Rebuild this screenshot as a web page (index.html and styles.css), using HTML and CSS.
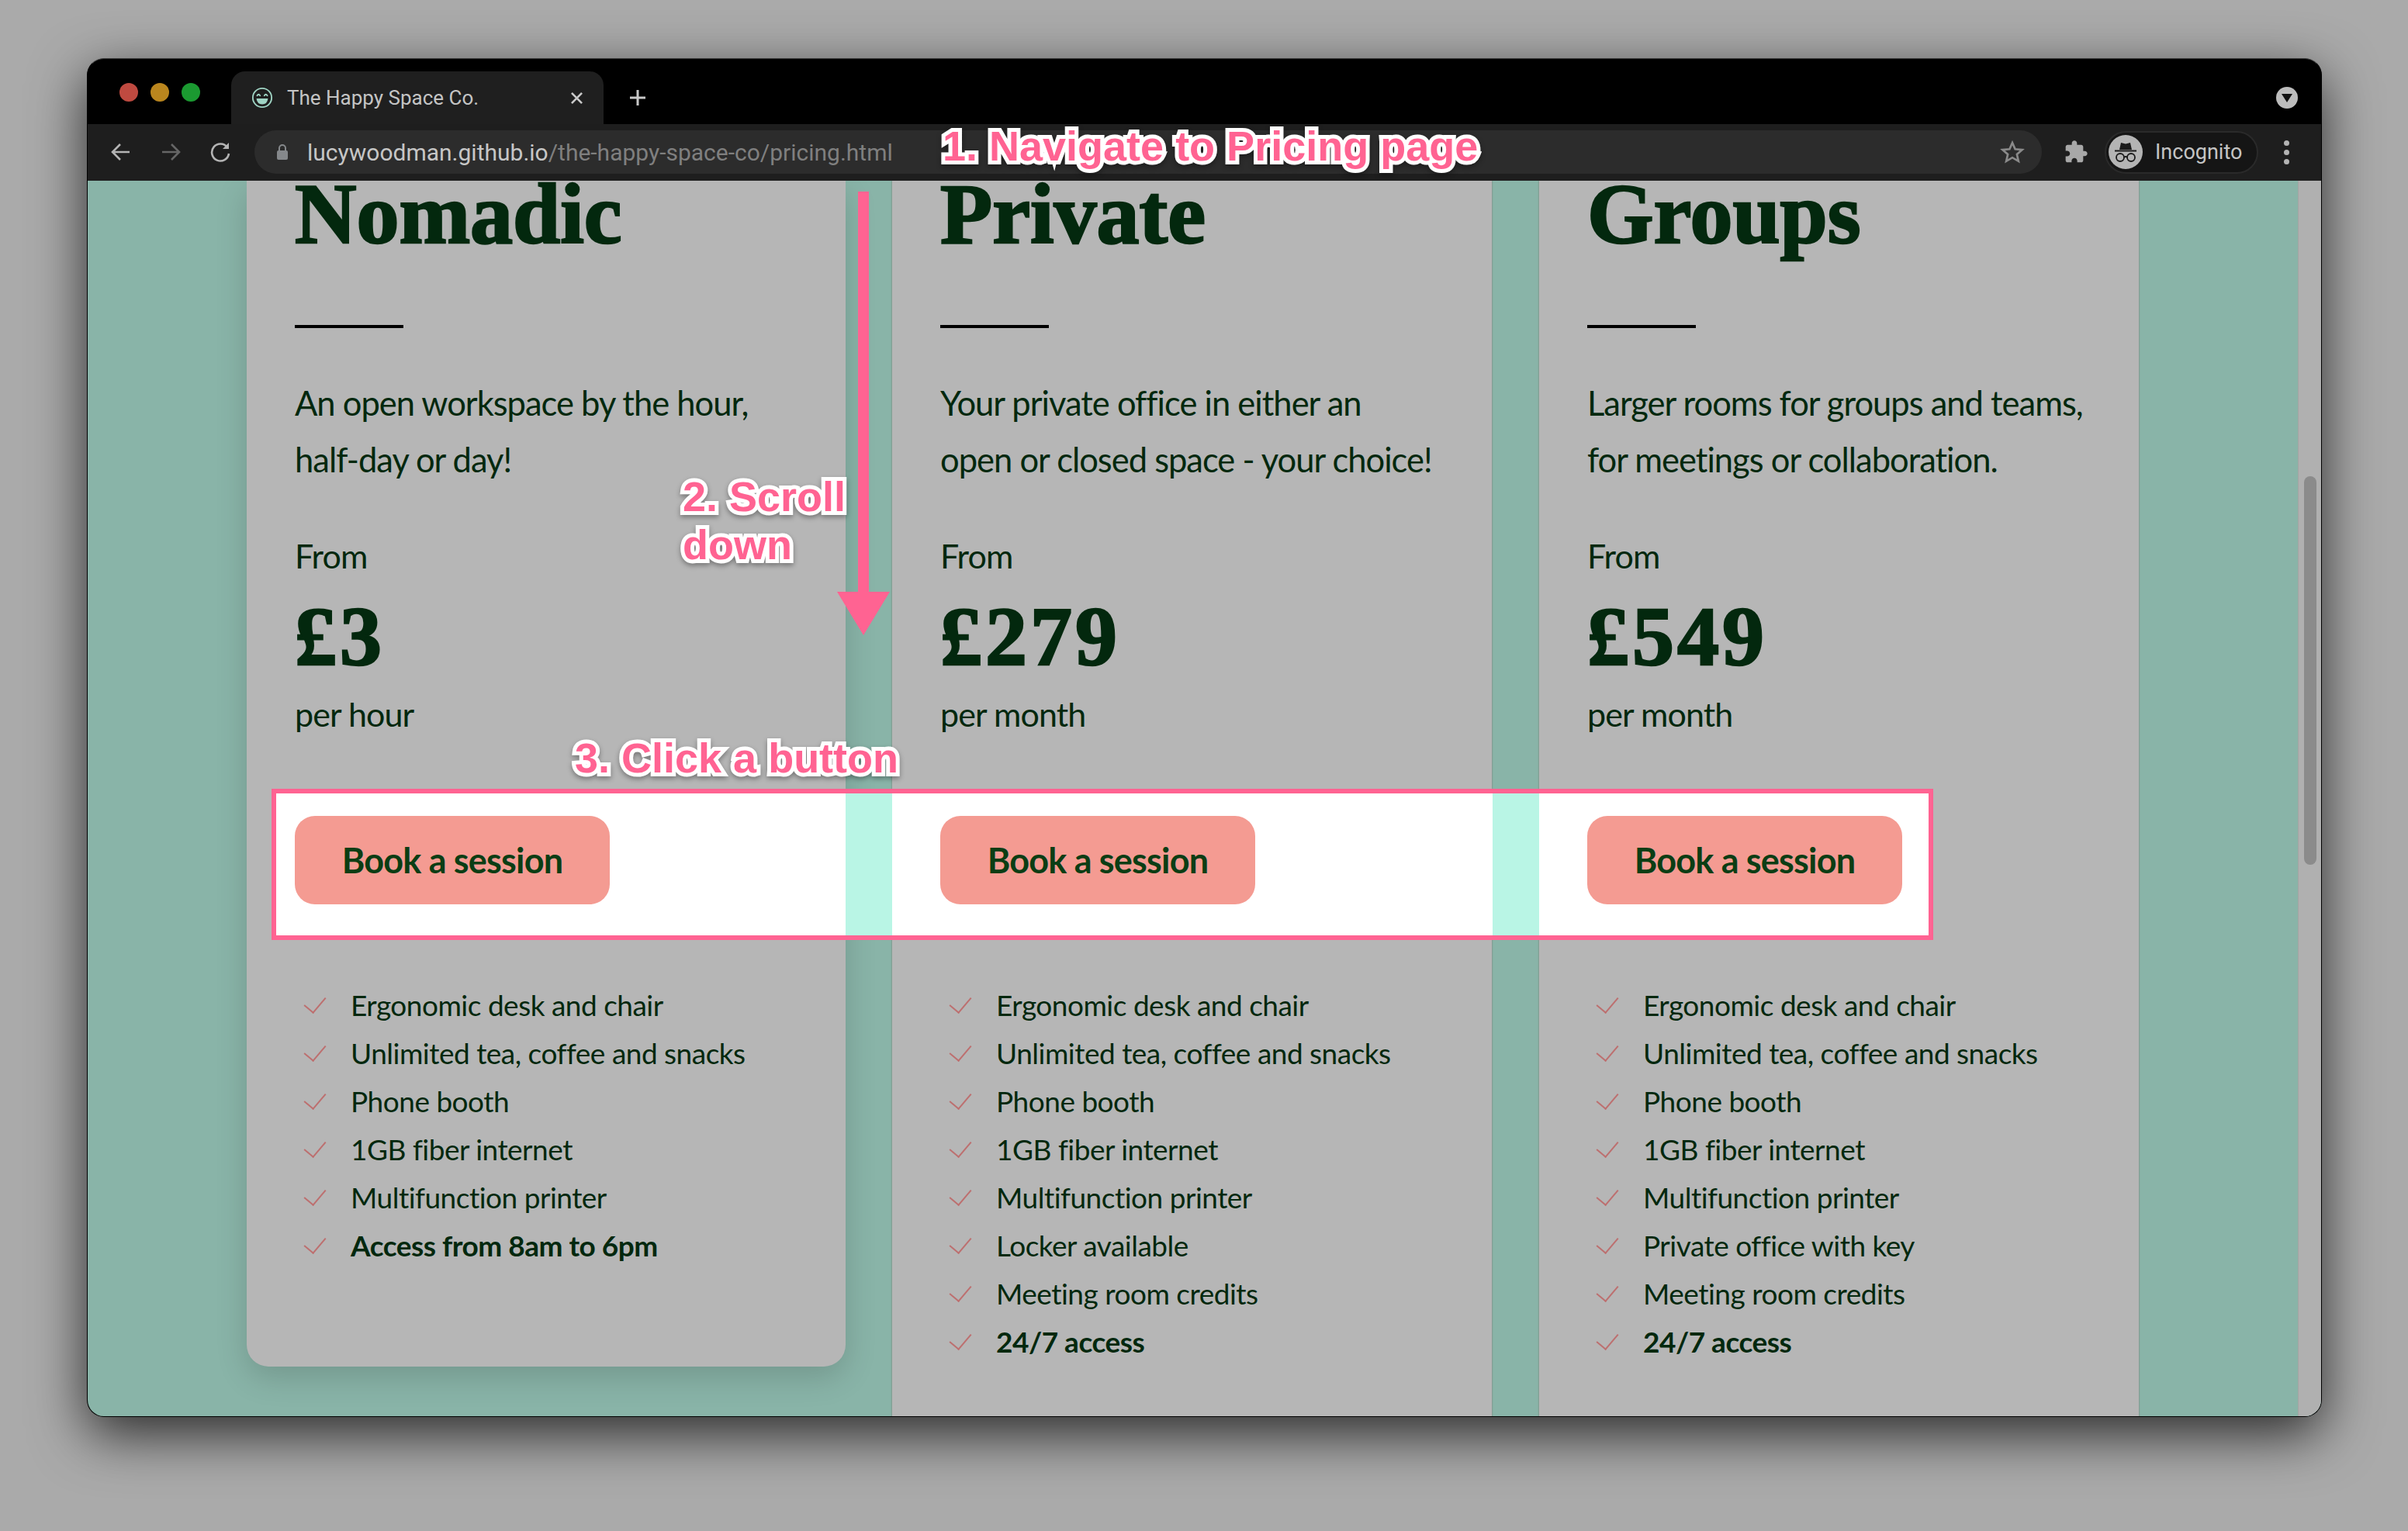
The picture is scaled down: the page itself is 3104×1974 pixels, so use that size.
FILE: index.html
```html
<!DOCTYPE html>
<html lang="en">
<head>
  <meta charset="UTF-8">
  <title>The Happy Space Co.</title>
  <link rel="stylesheet" href="styles.css">
</head>
<body>

  <div class="window">

    <div class="tabstrip">
      <div class="lights">
        <span class="light red"></span>
        <span class="light amber"></span>
        <span class="light green"></span>
      </div>
      <div class="tab">
        <svg class="favicon" viewBox="0 0 30 30" fill="none" stroke="#9fd4c4" stroke-width="2">
          <circle cx="15" cy="15" r="13"/>
          <path d="M8 12q2-3 4 0M18 12q2-3 4 0" stroke-linecap="round"/>
          <path d="M7 16h16q-1 8-8 8t-8-8z" fill="#9fd4c4" stroke="none"/>
        </svg>
        <span class="tab-title">The Happy Space Co.</span>
        <svg class="tab-close" viewBox="0 0 16 16" stroke="#c8c8c8" stroke-width="2"><path d="M3 3l10 10M13 3L3 13"/></svg>
      </div>
      <svg class="new-tab" viewBox="0 0 24 24" stroke="#c8c8c8" stroke-width="3"><path d="M12 2v20M2 12h20"/></svg>
      <div class="caret"><span></span></div>
    </div>

    <div class="toolbar">
      <svg class="nav-icon" viewBox="0 0 28 28" fill="none" stroke="#b4b4b4" stroke-width="2.6"><path d="M25 14H4M13 4L3 14l10 10"/></svg>
      <svg class="nav-icon" viewBox="0 0 28 28" fill="none" stroke="#666" stroke-width="2.6"><path d="M3 14h21M15 4l10 10-10 10"/></svg>
      <svg class="nav-icon" viewBox="0 0 28 28" fill="none" stroke="#b4b4b4" stroke-width="2.6"><path d="M23 8a11 11 0 1 0 2 8"/><path d="M25 2v8h-8" fill="#b4b4b4" stroke="none"/></svg>
      <div class="omnibox">
        <svg class="lock" viewBox="0 0 16 22"><path d="M4 9V6a4 4 0 0 1 8 0v3" fill="none" stroke="#85888b" stroke-width="2"/><rect x="1" y="9" width="14" height="12" rx="2" fill="#85888b"/></svg>
        <span class="url">lucywoodman.github.io<span class="url-path">/the-happy-space-co/pricing.html</span></span>
        <svg class="star" viewBox="0 0 24 24" fill="none" stroke="#8a8a8a" stroke-width="2"><path d="M12 3l2.7 6.2 6.8.6-5.1 4.5 1.5 6.6L12 17.4l-5.9 3.5 1.5-6.6-5.1-4.5 6.8-.6z"/></svg>
      </div>
      <svg class="puzzle" viewBox="0 0 24 24" fill="#a8a8a8"><path d="M20.5 11H19V7c0-1.1-.9-2-2-2h-4V3.500C13 2.120 11.880 1 10.500 1S8 2.120 8 3.500V5H4c-1.100 0-1.990.9-1.990 2v3.800H3.500c1.490 0 2.700 1.210 2.700 2.700s-1.210 2.700-2.700 2.700H2V20c0 1.100.9 2 2 2h3.800v-1.500c0-1.490 1.210-2.700 2.700-2.700 1.490 0 2.700 1.210 2.700 2.700V22H17c1.100 0 2-.9 2-2v-4h1.500c1.380 0 2.500-1.120 2.500-2.500S21.880 11 20.500 11z"/></svg>
      <div class="profile">
        <svg class="avatar" viewBox="0 0 44 44">
          <circle cx="22" cy="22" r="22" fill="#b4b4b4"/>
          <path d="M14 19l2-9 6 1.500 6-1.500 2 9z" fill="#1b1b1b"/>
          <path d="M8 20.500h28" stroke="#1b1b1b" stroke-width="2"/>
          <g fill="none" stroke="#1b1b1b" stroke-width="1.800">
            <circle cx="15" cy="29" r="5"/>
            <circle cx="29" cy="29" r="5"/>
            <path d="M20 28.500q2-1 4 0"/>
          </g>
        </svg>
        <span class="profile-name">Incognito</span>
      </div>
      <div class="kebab"><span></span><span></span><span></span></div>
    </div>

    <div class="viewport">
      <main class="page">
        <section class="card">
          <h2 class="card-title">Nomadic</h2>
          <hr class="rule">
          <p class="blurb">An open workspace by the hour, half-day or day!</p>
          <p class="from">From</p>
          <p class="price">£3</p>
          <p class="per">per hour</p>
          <a class="book" href="#">Book a session</a>
          <ul class="features">
            <li>Ergonomic desk and chair</li>
            <li>Unlimited tea, coffee and snacks</li>
            <li>Phone booth</li>
            <li>1GB fiber internet</li>
            <li>Multifunction printer</li>
            <li class="strong">Access from 8am to 6pm</li>
          </ul>
        </section>

        <section class="card">
          <h2 class="card-title">Private</h2>
          <hr class="rule">
          <p class="blurb">Your private office in either an open or closed space - your choice!</p>
          <p class="from">From</p>
          <p class="price">£279</p>
          <p class="per">per month</p>
          <a class="book" href="#">Book a session</a>
          <ul class="features">
            <li>Ergonomic desk and chair</li>
            <li>Unlimited tea, coffee and snacks</li>
            <li>Phone booth</li>
            <li>1GB fiber internet</li>
            <li>Multifunction printer</li>
            <li>Locker available</li>
            <li>Meeting room credits</li>
            <li class="strong">24/7 access</li>
          </ul>
        </section>

        <section class="card">
          <h2 class="card-title">Groups</h2>
          <hr class="rule">
          <p class="blurb">Larger rooms for groups and teams, for meetings or collaboration.</p>
          <p class="from">From</p>
          <p class="price">£549</p>
          <p class="per">per month</p>
          <a class="book" href="#">Book a session</a>
          <ul class="features">
            <li>Ergonomic desk and chair</li>
            <li>Unlimited tea, coffee and snacks</li>
            <li>Phone booth</li>
            <li>1GB fiber internet</li>
            <li>Multifunction printer</li>
            <li>Private office with key</li>
            <li>Meeting room credits</li>
            <li class="strong">24/7 access</li>
          </ul>
        </section>
      </main>

      <div class="scrollbar"><span class="thumb"></span></div>

      <div class="spotlight"></div>
    </div>

    <!-- annotations over the window -->
    <div class="note note-nav">1. Navigate to Pricing page</div>
    <div class="note note-scroll">2. Scroll<br>down</div>
    <div class="note note-click">3. Click a button</div>
    <svg class="arrow" viewBox="0 0 68 572">
      <rect x="27" y="0" width="14" height="520" fill="#ff6392"/>
      <path d="M0 516h68L34 572z" fill="#ff6392"/>
    </svg>

  </div>

</body>
</html>
```

FILE: styles.css
```css
* {
  box-sizing: border-box;
}

body {
  margin: 0;
  height: 1974px;
  padding: 75px 111px 0 112px;
  background-color: #aaaaaa;
  overflow: hidden;
  font-family: "Lato", sans-serif;
}

.window {
  position: relative;
  width: 2881px;
  height: 1752px;
  display: flex;
  flex-direction: column;
  border: 1px solid #000;
  border-top-color: #3a3a3a;
  border-radius: 22px;
  overflow: hidden;
  background-color: #000;
  box-shadow: 0 22px 70px rgba(0, 0, 0, 0.75);
}

/* browser chrome */
.tabstrip {
  height: 84px;
  flex-shrink: 0;
  display: flex;
  align-items: flex-end;
  padding-left: 41px;
  padding-right: 30px;
}

.lights {
  display: flex;
  gap: 16px;
  align-self: flex-start;
  margin-top: 31px;
  width: 144px;
}

.light {
  width: 24px;
  height: 24px;
  border-radius: 50%;
}

.red { background-color: #bf4a40; }
.amber { background-color: #ba861e; }
.green { background-color: #1b9a31; }

.tab {
  width: 480px;
  height: 68px;
  display: flex;
  align-items: center;
  padding: 0 24px 0 26px;
  background-color: #1f1f1f;
  border-radius: 18px 18px 0 0;
}

.favicon {
  width: 28px;
  height: 28px;
  flex-shrink: 0;
}

.tab-title {
  flex: 1;
  margin-left: 18px;
  font-family: "Roboto", sans-serif;
  font-size: 26px;
  color: #c4c4c4;
}

.tab-close {
  width: 21px;
  height: 21px;
}

.new-tab {
  width: 24px;
  height: 24px;
  margin: 0 0 22px 32px;
}

.caret {
  width: 28px;
  height: 28px;
  margin: 0 0 20px auto;
  display: flex;
  align-items: center;
  justify-content: center;
  border-radius: 50%;
  background-color: #bcbcbc;
}

.caret span {
  width: 0;
  height: 0;
  border-left: 7px solid transparent;
  border-right: 7px solid transparent;
  border-top: 11px solid #111;
}

.toolbar {
  height: 73px;
  flex-shrink: 0;
  display: flex;
  align-items: center;
  padding: 0 0 1px 29px;
  background-color: #1e1e1e;
}

.nav-icon {
  width: 28px;
  height: 28px;
  margin-right: 36px;
}

.omnibox {
  width: 2304px;
  height: 56px;
  flex-shrink: 0;
  margin-left: -6px;
  display: flex;
  align-items: center;
  padding: 0 22px 0 28px;
  border-radius: 28px;
  background-color: #2c2c2c;
}

.lock {
  width: 16px;
  height: 22px;
}

.url {
  flex: 1;
  margin-left: 24px;
  font-family: "Roboto", sans-serif;
  font-size: 30px;
  color: #c6c6c6;
}

.url-path {
  color: #7f7f7f;
}

.star {
  width: 32px;
  height: 32px;
}

.puzzle {
  width: 32px;
  height: 32px;
  margin-left: 28px;
}

.profile {
  width: 198px;
  height: 55px;
  margin-left: 21px;
  display: flex;
  align-items: center;
  padding-left: 3px;
  border: 2px solid #2a2a2a;
  border-radius: 28px;
  background-color: #151515;
}

.avatar {
  width: 44px;
  height: 44px;
}

.profile-name {
  margin-left: 16px;
  font-family: "Roboto", sans-serif;
  font-size: 27px;
  color: #c4c4c4;
}

.kebab {
  margin-left: 33px;
  display: flex;
  flex-direction: column;
  gap: 5px;
}

.kebab span {
  width: 7px;
  height: 7px;
  border-radius: 50%;
  background-color: #b4b4b4;
}

/* the page itself, scrolled down a bit */
.viewport {
  flex: 1;
  min-height: 0;
  position: relative;
  display: flex;
  overflow: hidden;
  background-color: #89b4a8;
}

.page {
  flex: 1;
  display: grid;
  grid-template-columns: 771px 773px 773px;
  column-gap: 61px;
  align-items: start;
  padding-left: 205px;
}

.card {
  height: 1700px;
  padding: 0 62px;
  background-color: #b6b6b6;
  color: #03280e;
  box-shadow: 0 0 2px rgba(110, 70, 70, 0.6);
}

.card:first-child {
  width: 772px;
  height: 1529px;
  border-radius: 0 0 28px 28px;
  box-shadow: 0 14px 40px rgba(0, 0, 0, 0.16);
}

.card-title {
  height: 104px;
  margin: 0;
  font-family: "Liberation Serif", serif;
  font-size: 110px;
  font-weight: 700;
  line-height: 86px;
  -webkit-text-stroke: 2.5px #03280e;
}

.rule {
  width: 140px;
  height: 4px;
  margin: 82px 0 0;
  border: 0;
  background-color: #000;
}

.blurb {
  max-width: 642px;
  margin: 60px 0 0;
  font-size: 43.5px;
  letter-spacing: -1px;
  line-height: 73px;
}

.from {
  margin: 60px 0 0;
  font-size: 43px;
  letter-spacing: -0.9px;
  line-height: 56px;
}

.price {
  margin: 16px 0 0;
  font-family: "Liberation Serif", serif;
  font-size: 108px;
  font-weight: 700;
  letter-spacing: 4px;
  line-height: 120px;
  -webkit-text-stroke: 2.5px #03280e;
}

.per {
  margin: 12px 0 0;
  font-size: 43px;
  letter-spacing: -0.9px;
  line-height: 56px;
}

.book {
  position: relative;
  z-index: 2;
  display: flex;
  align-items: center;
  justify-content: center;
  width: 406px;
  height: 114px;
  margin-top: 103px;
  border-radius: 26px;
  background-color: #f49b92;
  color: #0b3d14;
  font-size: 45px;
  font-weight: 700;
  letter-spacing: -0.8px;
  text-decoration: none;
}

.features {
  list-style: none;
  margin: 98px 0 0;
  padding: 0;
}

.features li {
  height: 62px;
  display: flex;
  align-items: center;
  gap: 38px;
  font-size: 37px;
  letter-spacing: -0.5px;
}

.features li::before {
  content: "";
  width: 14px;
  height: 24px;
  margin: -6px 0 0 18px;
  border-right: 2px solid #bd6f6f;
  border-bottom: 2px solid #bd6f6f;
  transform: rotate(40deg);
}

.features .strong {
  font-weight: 700;
}

.scrollbar {
  width: 30px;
  flex-shrink: 0;
  padding: 381px 7px 0;
  background-color: #b0b0b0;
  border-left: 1px solid #a4a4a4;
}

.thumb {
  display: block;
  width: 16px;
  height: 501px;
  border-radius: 8px;
  background-color: #8b8b8b;
}

/* annotations */
.spotlight {
  position: absolute;
  z-index: 1;
  left: 237px;
  top: 784px;
  width: 2142px;
  height: 195px;
  border: 6px solid #ff6392;
  background: linear-gradient(to right,
    #fff 734px, #b9f5e5 734px, #b9f5e5 794px,
    #fff 794px, #fff 1568px, #b9f5e5 1568px, #b9f5e5 1628px,
    #fff 1628px);
}

.note {
  position: absolute;
  z-index: 3;
  font-family: "Liberation Sans", sans-serif;
  font-size: 54px;
  font-weight: 700;
  line-height: 62px;
  color: #ff6392;
  white-space: nowrap;
  -webkit-text-stroke: 10px #fff;
  paint-order: stroke fill;
  filter: drop-shadow(0 3px 3px rgba(0, 0, 0, 0.35));
}

.note-nav { left: 1102px; top: 81px; }
.note-scroll { left: 767px; top: 533px; }
.note-click { left: 628px; top: 870px; }

.arrow {
  position: absolute;
  z-index: 3;
  left: 966px;
  top: 171px;
  width: 68px;
  height: 572px;
}
```
